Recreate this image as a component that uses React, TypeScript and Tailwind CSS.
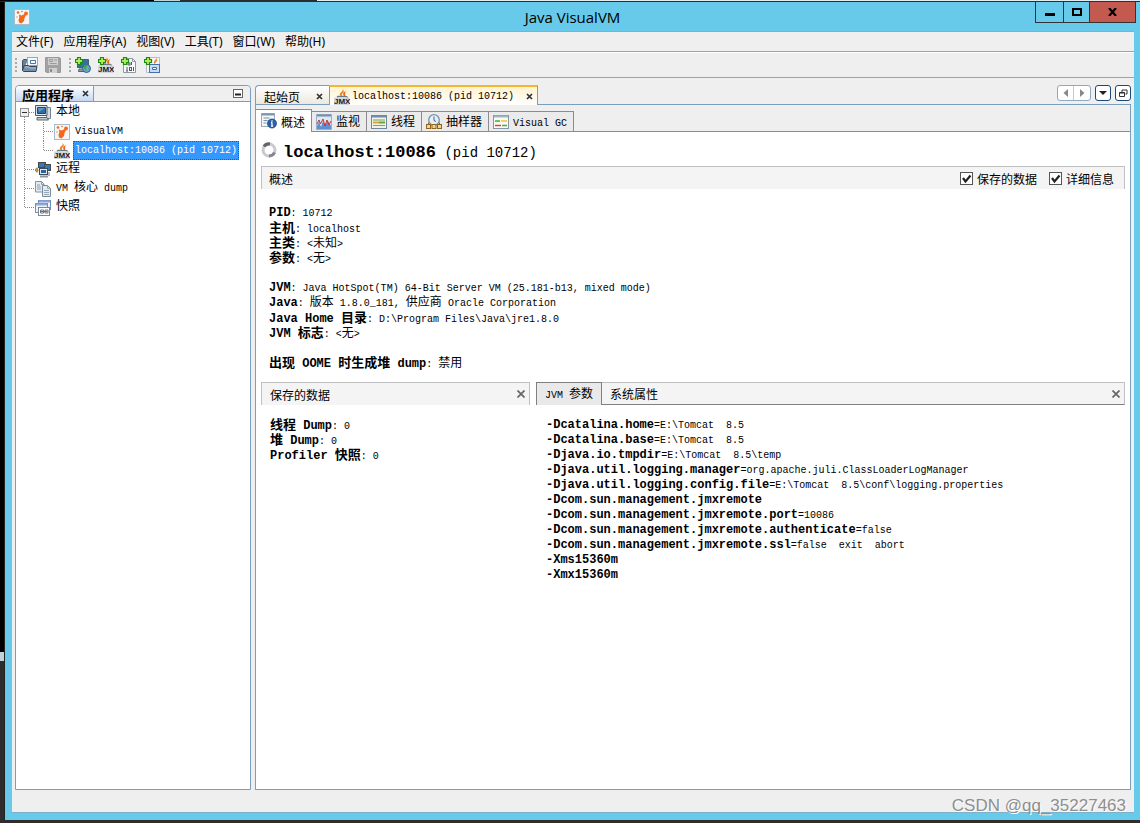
import type { ReactNode } from "react";

const CJK = /([\u3000-\u9fff\uff00-\uffef]+)/;

// Latin and CJK runs get their own sizes so that both keep the same grid
function Mixed({ text, bold = false }: { text: string; bold?: boolean }) {
  return (
    <>
      {text.split(CJK).map((run, i) => {
        if (!run) return null;
        const size = CJK.test(run)
          ? bold
            ? "text-[13px]"
            : "text-[12px]"
          : bold
            ? "text-[12px]"
            : "text-[10px]";
        return (
          <span
            key={i}
            className={`font-['Liberation_Mono','Noto_Sans_CJK_SC',monospace] ${size} ${bold ? "font-bold" : ""}`}
          >
            {run}
          </span>
        );
      })}
    </>
  );
}

function Icon({ children }: { children: ReactNode }) {
  return (
    <svg width="16" height="16" viewBox="0 0 16 16" className="shrink-0" aria-hidden="true">
      {children}
    </svg>
  );
}

function Plus() {
  return (
    <path
      d="M2.5.5h3v2h2v3h-2v2h-3v-2h-2v-3h2z"
      fill="#b6ec5c"
      stroke="#1f8a12"
      strokeWidth="1.2"
    />
  );
}

function Jmx() {
  return (
    <>
      <path d="M8.500 0c1.500 2.500-3.500 3.500-2.500 6 .5 1.200 2 1.500 2 1.500s-.8-2 .5-3.200C10.500 2.800 10 1 8.500 0z" fill="#f0801a" />
      <path d="M12 2C9 3.200 8.500 4.500 9.500 6l.5 1.500c2.500-1.500 0-2.500 2-5.500z" fill="#e8691a" />
      <path d="M3 8.500l1-1h8l2 1" fill="none" stroke="#6c7884" strokeWidth="1.300" />
      <path d="M0 8.500h15.500V16H0z" fill="#d3d7da" />
      <text x="0" y="15" fontSize="8" fontWeight="700" fontFamily="Liberation Sans, sans-serif" fill="#1c1c1c">
        JMX
      </text>
    </>
  );
}

function JmxIcon() {
  return (
    <Icon>
      <Jmx />
    </Icon>
  );
}

function OpenIcon() {
  return (
    <Icon>
      <path d="M.5 14V3.500l1-1h3l1 1.500" fill="#6e8093" stroke="#3d5266" />
      <rect x="5.500" y=".5" width="10" height="8" fill="#f4f8fd" stroke="#8ea9c9" />
      <path d="M8.500 3.500h5v3h-5z" fill="#fff" stroke="#4474ad" />
      <path d="M1.500 14.500l-1-1 1.500-5h4.500l1 1h7.500l-1 5z" fill="#7890a6" stroke="#34495c" />
      <path d="M3 10h4l1 1h6" fill="none" stroke="#b4c4d2" />
    </Icon>
  );
}

function SaveIcon() {
  return (
    <Icon>
      <path d="M.5.500h14l1 1v14H1.500l-1-1z" fill="#a2a2a2" stroke="#999" />
      <path d="M3 1h10v7H3z" fill="#cecece" />
      <path d="M4.500 2.500h3v2h-3zM9 3h3M4.500 6.500h7" fill="none" stroke="#9c9c9c" />
      <path d="M4 11h8v5H4z" fill="#d0d0d0" />
      <path d="M5 12h2v3H5z" fill="#8e8e8e" />
    </Icon>
  );
}

function AddHostIcon() {
  return (
    <Icon>
      <path d="M2.500 2.500h11v8h-11z" fill="#2f72a8" stroke="#4c5f6d" />
      <path d="M4 12h6l1 2.500H3.500z" fill="#93a1aa" stroke="#53636e" />
      <circle cx="11.500" cy="11.500" r="4" fill="#6fa9dd" stroke="#2c5f91" />
      <path d="M9 9l2-1.500 1.500 1.500-1.500 2 1 3-2-1-1-2zM13 10l2 1-1 2.500z" fill="#48a340" />
      <Plus />
    </Icon>
  );
}

function AddJmxIcon() {
  return (
    <Icon>
      <Jmx />
      <Plus />
    </Icon>
  );
}

function AddDumpIcon() {
  return (
    <Icon>
      <path d="M2.500 1.500h9l3 3v11h-12z" fill="#f7f9fa" stroke="#8c99a3" />
      <path d="M11.500 1.500v3h3" fill="none" stroke="#8c99a3" />
      <path d="M10.500 5v3M6 10v4M5 14h2M12.500 10v4" stroke="#4f5b65" />
      <rect x="7" y="6" width="2" height="2" fill="none" stroke="#4f5b65" />
      <rect x="8.500" y="10.500" width="2" height="3" fill="none" stroke="#4f5b65" />
      <Plus />
    </Icon>
  );
}

function AddSnapshotIcon() {
  return (
    <Icon>
      <path d="M2.500.500h13v15h-13z" fill="#f3f6fa" stroke="#b5bec8" />
      <path d="M12 1c.5 2-3 2.500-2 6l2-1.500L13.500 3z" fill="#f08a2a" />
      <rect x="5.500" y="7.500" width="10" height="8" fill="#cbdcf2" stroke="#426fae" />
      <path d="M8.500 10.500h4v2h-4z" fill="#fff" stroke="#426fae" />
      <Plus />
    </Icon>
  );
}

function VisualVmIcon() {
  return (
    <Icon>
      <rect x=".5" y=".5" width="15" height="15" fill="#f7f5f4" stroke="#a9bccb" />
      <path d="M5 5.500l2.500 1L11 5l1 1-1.500 3-.5 3-2.500 2.500-2.500-1-.5-2.500.8-2.500z" fill="#f2691e" />
      <circle cx="4" cy="3.500" r="1.300" fill="#f2691e" />
      <circle cx="12" cy="4.500" r="1.900" fill="#f2691e" />
      <circle cx="8" cy="2.500" r=".8" fill="#f2691e" />
      <circle cx="3" cy="8" r=".8" fill="#f59a66" />
    </Icon>
  );
}

function LocalIcon() {
  return (
    <Icon>
      <path d="M11.500 2.500h4v11h-4z" fill="#d5dadd" stroke="#77858f" />
      <path d="M.5.500h11.500v10H.5z" fill="#dde3e6" stroke="#4e5a63" />
      <path d="M2.500 2.500h8v6h-8z" fill="#2b6ea8" stroke="#174a78" />
      <path d="M3 3h7L4 7z" fill="#5b98c8" />
      <path d="M2 12.500h10l1.500 2.500H2z" fill="#c4cace" stroke="#5c6871" />
    </Icon>
  );
}

function RemoteIcon() {
  return (
    <Icon>
      <path d="M2 5.500v5M14 10v4" stroke="#6a757d" />
      <rect x="3.500" y=".5" width="7" height="5" fill="#3c78ac" stroke="#3f4a52" />
      <rect x="9.500" y="2.500" width="6" height="6" fill="#3c78ac" stroke="#3f4a52" />
      <rect x="4.500" y="6.500" width="8" height="6" fill="#e1e6e9" stroke="#3f4a52" />
      <rect x="6" y="8" width="5" height="3" fill="#2367a6" />
      <path d="M5 14.500h8" stroke="#8b959c" strokeWidth="2" />
      <circle cx="1.700" cy="8" r="1.500" fill="#d99a3f" stroke="#8b6226" strokeWidth=".6" />
    </Icon>
  );
}

function CoreDumpIcon() {
  return (
    <Icon>
      <path d="M.5.500h6l2.500 2.500v8H.5z" fill="#e4ebf1" stroke="#8293a2" />
      <path d="M6.500.500v3H9M2 4h3M2 6h4M2 8h4" fill="none" stroke="#8d9dab" />
      <path d="M7.500 4.500h5l3 3v8h-8z" fill="#e4ebf1" stroke="#7a8b9b" />
      <path d="M12.500 4.500v3h3M9 9.500h5M9 11.500h5M9 13.500h5" fill="none" stroke="#99a8b5" />
    </Icon>
  );
}

function SnapshotIcon() {
  return (
    <Icon>
      <rect x="3.500" y=".5" width="12" height="9" fill="#eef3fa" stroke="#6f8fc0" />
      <path d="M4 1.500h11" stroke="#8fabd4" strokeWidth="2" />
      <rect x=".5" y="3.500" width="12" height="9" fill="#eef3fa" stroke="#6f8fc0" />
      <path d="M1 4.500h11" stroke="#8fabd4" strokeWidth="2" />
      <rect x="3.500" y="7.500" width="11" height="8" fill="#fff" stroke="#7f8890" />
      <path d="M5.500 10h3v3h-3zM10 10h3v3h-3zM5.500 11.500h7" fill="none" stroke="#68737c" />
    </Icon>
  );
}

function OverviewIcon() {
  return (
    <Icon>
      <rect x=".5" y=".5" width="13" height="13" fill="#f4f7fa" stroke="#9daab6" />
      <path d="M1 1.500h12" stroke="#7996b4" strokeWidth="2" />
      <path d="M2.500 5h6M2.500 7.500h4M2.500 10h3" stroke="#7b93ac" />
      <circle cx="11" cy="10.500" r="4.500" fill="#2b62a8" stroke="#1d467c" strokeWidth=".8" />
      <path d="M11 7.200v1.500M11 9.500v3.800M10 13.200h2.200M10 9.700h1" stroke="#fff" strokeWidth="1.200" />
    </Icon>
  );
}

function MonitorIcon() {
  return (
    <Icon>
      <rect x=".5" y=".5" width="15" height="15" fill="#dbe7f2" stroke="#9fb1c3" />
      <path d="M1 1.500h14" stroke="#6e90b3" strokeWidth="2" />
      <path d="M1 15v-3l2-4 2 5 2-6 2 4 3-4 3 5v3z" fill="#5c90d2" />
      <path d="M1 10l2-4 1.500 4L7 5l2 7 2-6 2 5 2-4" fill="none" stroke="#d42f2f" />
    </Icon>
  );
}

function ThreadsIcon() {
  return (
    <Icon>
      <rect x=".5" y="1.500" width="15" height="13" fill="#f2f3e3" stroke="#71879c" />
      <path d="M1 2.500h14" stroke="#6e8cac" strokeWidth="2" />
      <path d="M2 6h12" stroke="#7b9f55" />
      <path d="M2 8.500h6" stroke="#d9a63a" strokeWidth="2" />
      <path d="M8 8.500h6" stroke="#5ca944" strokeWidth="2" />
      <path d="M2 11.500h12" stroke="#8a9a68" />
    </Icon>
  );
}

function SamplerIcon() {
  return (
    <Icon>
      <circle cx="8" cy="6" r="5.300" fill="#e6eff7" stroke="#7890a8" strokeWidth="1.300" />
      <path d="M8 2.500V6.500l2 1" fill="none" stroke="#466383" />
      <rect x=".5" y="10.500" width="4" height="4" fill="#f6d487" stroke="#8d6420" />
      <rect x="6" y="10.500" width="4" height="4" fill="#f6d487" stroke="#8d6420" />
      <rect x="11.500" y="10.500" width="4" height="4" fill="#f6d487" stroke="#8d6420" />
      <path d="M2.500 10V8.500M13.500 10V8.500" stroke="#8d6420" />
    </Icon>
  );
}

function GcIcon() {
  return (
    <Icon>
      <rect x=".5" y="1.500" width="15" height="13" fill="#fbfbf4" stroke="#8497a9" />
      <path d="M1 2.500h14" stroke="#9fb5cb" strokeWidth="2" />
      <path d="M2 7h5M9 11.500h5" stroke="#43b02f" strokeWidth="1.400" />
      <path d="M8 7h6" stroke="#e7c51e" strokeWidth="1.400" />
      <path d="M2 11.500h6" stroke="#dc3a2a" strokeWidth="1.400" />
    </Icon>
  );
}

function SmallCross() {
  return (
    <svg width="7" height="7" viewBox="0 0 7 7" aria-hidden="true">
      <path d="M1 1l5 5M6 1L1 6" stroke="#333" strokeWidth="1.700" />
    </svg>
  );
}

function CloseSection({ label }: { label: string }) {
  return (
    <button type="button" aria-label={label} className="ml-auto mr-1 flex">
      <svg width="8" height="8" viewBox="0 0 8 8" aria-hidden="true">
        <path d="M.5.500l7 7M7.500.500l-7 7" stroke="#666" strokeWidth="1.700" />
      </svg>
    </button>
  );
}

const menus = ["文件(F)", "应用程序(A)", "视图(V)", "工具(T)", "窗口(W)", "帮助(H)"];

const views = [
  { label: "概述", icon: <OverviewIcon />, active: true },
  { label: "监视", icon: <MonitorIcon /> },
  { label: "线程", icon: <ThreadsIcon /> },
  { label: "抽样器", icon: <SamplerIcon /> },
  { label: "Visual GC", icon: <GcIcon /> },
];

const details = [
  ["PID", "10712"],
  ["主机", "localhost"],
  ["主类", "<未知>"],
  ["参数", "<无>"],
  null,
  ["JVM", "Java HotSpot(TM) 64-Bit Server VM (25.181-b13, mixed mode)"],
  ["Java", "版本 1.8.0_181, 供应商 Oracle Corporation"],
  ["Java Home 目录", "D:\\Program Files\\Java\\jre1.8.0"],
  ["JVM 标志", "<无>"],
  null,
  ["出现 OOME 时生成堆 dump", "禁用"],
];

const savedData = [
  ["线程 Dump", "0"],
  ["堆 Dump", "0"],
  ["Profiler 快照", "0"],
];

const jvmArgs = [
  ["-Dcatalina.home", "=E:\\Tomcat  8.5"],
  ["-Dcatalina.base", "=E:\\Tomcat  8.5"],
  ["-Djava.io.tmpdir", "=E:\\Tomcat  8.5\\temp"],
  ["-Djava.util.logging.manager", "=org.apache.juli.ClassLoaderLogManager"],
  ["-Djava.util.logging.config.file", "=E:\\Tomcat  8.5\\conf\\logging.properties"],
  ["-Dcom.sun.management.jmxremote", ""],
  ["-Dcom.sun.management.jmxremote.port", "=10086"],
  ["-Dcom.sun.management.jmxremote.authenticate", "=false"],
  ["-Dcom.sun.management.jmxremote.ssl", "=false  exit  abort"],
  ["-Xms15360m", ""],
  ["-Xmx15360m", ""],
];

function TextLine({ children }: { children?: ReactNode }) {
  return (
    <div className="flex h-[15px] items-center whitespace-pre font-['Liberation_Mono','Noto_Sans_CJK_SC',monospace]">
      <p>{children}</p>
    </div>
  );
}

function DetailLines({ rows }: { rows: (string[] | null)[] }) {
  return (
    <>
      {rows.map((row, i) => (
        <TextLine key={i}>
          {row && (
            <>
              <Mixed text={row[0]} bold />
              <Mixed text={`: ${row[1]}`} />
            </>
          )}
        </TextLine>
      ))}
    </>
  );
}

type Branch = "expander" | "tee" | "corner" | "line";

function Connector({ kind }: { kind: Branch }) {
  return (
    <svg width="19" height="19" viewBox="0 0 19 19" className="shrink-0" aria-hidden="true">
      {kind !== "expander" && (
        <path d={kind === "corner" ? "M8.500 0V9.500" : "M8.500 0V19"} stroke="#888" strokeDasharray="1 1" />
      )}
      {(kind === "tee" || kind === "corner") && (
        <path d="M9 9.500H19" stroke="#888" strokeDasharray="1 1" />
      )}
      {kind === "expander" && (
        <>
          <path d="M13 9.500H19M8.500 14V19" stroke="#888" strokeDasharray="1 1" />
          <rect x="4.500" y="5.500" width="8" height="8" fill="#f0f0f0" stroke="#919191" />
          <path d="M6 9.500h5" stroke="#333" />
        </>
      )}
    </svg>
  );
}

const tree: { label: string; icon: ReactNode; branches: Branch[]; selected?: boolean }[] = [
  { label: "本地", icon: <LocalIcon />, branches: ["expander"] },
  { label: "VisualVM", icon: <VisualVmIcon />, branches: ["line", "tee"] },
  { label: "localhost:10086 (pid 10712)", icon: <JmxIcon />, branches: ["line", "corner"], selected: true },
  { label: "远程", icon: <RemoteIcon />, branches: ["tee"] },
  { label: "VM 核心 dump", icon: <CoreDumpIcon />, branches: ["tee"] },
  { label: "快照", icon: <SnapshotIcon />, branches: ["corner"] },
];

function Applications() {
  return (
    <aside className="flex w-[236px] shrink-0 flex-col rounded-t border border-[#7b9ebd] bg-white">
      <div className="flex h-[16px] items-center justify-between rounded-t border-b border-[#7b9ebd] bg-[#efefef]">
        <div className="flex h-[15px] items-start rounded-tl border-r border-[#7b9ebd] bg-linear-to-b from-white to-[#c6d7f3] pl-1.5 pr-1">
          <h2 className="text-[13px] font-bold leading-[18px]">应用程序</h2>
          <button type="button" aria-label="关闭应用程序" className="ml-2 mt-1 flex">
            <SmallCross />
          </button>
        </div>
        <button type="button" aria-label="最小化面板" className="mr-[7px] flex">
          <svg width="10" height="9" viewBox="0 0 10 9" aria-hidden="true">
            <rect x=".5" y=".5" width="9" height="8" fill="#fff" stroke="#666" />
            <path d="M2 5.500h6" stroke="#222" strokeWidth="2" />
          </svg>
        </button>
      </div>
      <ul className="pt-px">
        {tree.map((node) => (
          <li key={node.label} className="flex h-[19px] items-center">
            {node.branches.map((kind, i) => (
              <Connector key={i} kind={kind} />
            ))}
            {node.icon}
            <span
              className={`ml-[3px] flex h-[19px] items-center whitespace-pre border px-px font-['Liberation_Mono','Noto_Sans_CJK_SC',monospace] ${
                node.selected
                  ? "border-dotted border-[#7a4a10] bg-[#3399ff] text-white"
                  : "border-transparent"
              }`}
            >
              <span>
                <Mixed text={node.label} />
              </span>
            </span>
          </li>
        ))}
      </ul>
    </aside>
  );
}

function CheckOption({ label }: { label: string }) {
  return (
    <label className="flex items-center gap-1">
      <span className="grid size-[13px]">
        <input
          type="checkbox"
          defaultChecked
          className="peer col-start-1 row-start-1 size-[13px] appearance-none border border-[#555] bg-white"
        />
        <svg
          viewBox="0 0 13 13"
          className="pointer-events-none invisible col-start-1 row-start-1 size-[13px] peer-checked:visible"
          aria-hidden="true"
        >
          <path d="M3 6l2.500 3.500L10.500 3.500" fill="none" stroke="#222" strokeWidth="2.200" />
        </svg>
      </span>
      {label}
    </label>
  );
}

function EditorTabs() {
  return (
    <div className="flex h-5 items-end">
      <div className="flex h-5 items-center rounded-tl border border-r-0 border-[#7b9ebd] bg-linear-to-b from-white to-[#ece9df] pl-2 pr-1.5 pt-0.5">
        <button type="button">起始页</button>
        <button type="button" aria-label="关闭起始页" className="ml-4 flex">
          <SmallCross />
        </button>
      </div>
      <div className="flex h-5 items-center border-x border-t-2 border-x-[#7b9ebd] border-t-[#f6b633] bg-linear-to-b from-[#fff3cf] to-white px-1 pt-px">
        <JmxIcon />
        <button type="button" className="ml-0.5 flex">
          <Mixed text="localhost:10086 (pid 10712)" />
        </button>
        <button type="button" aria-label="关闭 localhost" className="ml-3 flex">
          <SmallCross />
        </button>
      </div>
      <div className="flex h-5 grow items-start justify-end gap-1 border-b border-[#7b9ebd]">
        <div className="flex h-4 rounded-[3px] border border-[#8fa9c0] bg-white">
          <button type="button" aria-label="上一个" className="grid w-4 place-items-center border-r border-[#c4ccd3]">
            <svg width="5" height="8" viewBox="0 0 5 8" aria-hidden="true">
              <path d="M5 0v8L.5 4z" fill="#888" />
            </svg>
          </button>
          <button type="button" aria-label="下一个" className="grid w-4 place-items-center">
            <svg width="5" height="8" viewBox="0 0 5 8" aria-hidden="true">
              <path d="M0 0v8l4.500-4z" fill="#888" />
            </svg>
          </button>
        </div>
        <button
          type="button"
          aria-label="文档列表"
          className="grid size-4 place-items-center rounded-[3px] border border-[#1d4a78] bg-white"
        >
          <svg width="8" height="4" viewBox="0 0 8 4" aria-hidden="true">
            <path d="M0 0h8L4 4z" fill="#222" />
          </svg>
        </button>
        <button
          type="button"
          aria-label="还原"
          className="grid size-4 place-items-center rounded-[3px] border border-[#1d4a78] bg-white"
        >
          <svg width="9" height="9" viewBox="0 0 9 9" aria-hidden="true">
            <path d="M3 3V1h5v4H6.500" fill="none" stroke="#333" />
            <path d="M.5 3.500h5v4h-5zM.5 4h5" fill="none" stroke="#333" />
          </svg>
        </button>
      </div>
    </div>
  );
}

function Editor() {
  return (
    <main className="flex min-w-0 grow flex-col">
      <EditorTabs />
      <div className="flex grow flex-col border border-t-0 border-[#7b9ebd] bg-white">
        <nav className="flex h-[27px] items-end bg-[#efefef] pt-1">
          {views.map((view) =>
            view.active ? (
              <button
                key={view.label}
                type="button"
                className="flex h-[23px] items-center gap-1 border-r border-t border-[#8b8b90] bg-white pl-[5px] pr-1.5"
              >
                {view.icon}
                {view.label}
              </button>
            ) : (
              <button
                key={view.label}
                type="button"
                className="flex h-[21px] items-center gap-1 border-y border-r border-[#8b8b90] bg-[#ebebeb] pl-1 pr-1.5"
              >
                {view.icon}
                <span>
                  <Mixed text={view.label} />
                </span>
              </button>
            ),
          )}
          <span className="h-px grow bg-[#8b8b90]" />
        </nav>

        <div className="px-[5px]">
          <header className="flex h-[34px] items-center whitespace-pre pt-2 font-['Liberation_Mono',monospace]">
            <svg width="16" height="16" viewBox="0 0 16 16" className="-mt-1.5 mr-1.5" aria-hidden="true">
              <circle cx="8" cy="8" r="6" fill="none" stroke="#c9cace" strokeWidth="3" />
              <path d="M3 4.500A6 6 0 0 1 9 2" fill="none" stroke="#63646b" strokeWidth="3" />
              <path d="M13.500 10.500A6 6 0 0 1 8 14" fill="none" stroke="#85868d" strokeWidth="3" />
            </svg>
            <h1 className="text-[14px]">
              <b className="text-[17px]">localhost:10086</b> (pid 10712)
            </h1>
          </header>

          <div className="flex h-[23px] items-center gap-3 border border-b-0 border-[#c0c0c0] bg-[#f4f4f4] pl-[7px] pr-2.5 pt-px">
            <h2 className="mr-auto">概述</h2>
            <CheckOption label="保存的数据" />
            <CheckOption label="详细信息" />
          </div>

          <section className="pl-2 pt-[17px]">
            <DetailLines rows={details} />
          </section>

          <div className="mt-[11px] grid grid-cols-[269fr_589fr] gap-1.5">
            <section>
              <div className="flex h-[23px] items-center border border-b-0 border-[#c0c0c0] bg-[#f4f4f4] pl-2">
                <h2>保存的数据</h2>
                <CloseSection label="关闭保存的数据" />
              </div>
              <div className="pl-[9px] pt-[13px]">
                <DetailLines rows={savedData} />
              </div>
            </section>
            <section>
              <div className="flex h-[23px] items-stretch">
                <button
                  type="button"
                  className="border border-b-0 border-[#808080] bg-[#e9e9e9] px-2 text-center"
                >
                  <Mixed text="JVM 参数" />
                </button>
                <div className="flex grow items-center border border-l-0 border-[#c0c0c0] border-b-[#808080] bg-[#f4f4f4] pl-2">
                  <button type="button">系统属性</button>
                  <CloseSection label="关闭 JVM 参数" />
                </div>
              </div>
              <div className="pl-2.5 pt-[13px]">
                {jvmArgs.map(([name, value]) => (
                  <TextLine key={name}>
                    <Mixed text={name} bold />
                    <Mixed text={value} />
                  </TextLine>
                ))}
              </div>
            </section>
          </div>
        </div>
      </div>
    </main>
  );
}

function Grip() {
  return <span className="h-3.5 border-l-2 border-dotted border-[#a8a8a8]" />;
}

function Toolbar() {
  const addActions = [
    { label: "添加主机", icon: <AddHostIcon /> },
    { label: "添加 JMX 连接", icon: <AddJmxIcon /> },
    { label: "添加核心 dump", icon: <AddDumpIcon /> },
    { label: "添加快照", icon: <AddSnapshotIcon /> },
  ];
  return (
    <div className="flex h-[26px] items-center border-b border-t border-b-[#a0a0a0] border-t-white pl-[3px]">
      <Grip />
      <div className="ml-[5px] mr-2 flex gap-[7px]">
        <button type="button" aria-label="打开文件">
          <OpenIcon />
        </button>
        <button type="button" aria-label="另存为" disabled>
          <SaveIcon />
        </button>
      </div>
      <Grip />
      <div className="ml-1 flex gap-[7px]">
        {addActions.map((action) => (
          <button key={action.label} type="button" aria-label={action.label}>
            {action.icon}
          </button>
        ))}
      </div>
    </div>
  );
}

function TitleBar() {
  return (
    <header className="grid h-[29px] grid-cols-[1fr_auto_1fr] items-center">
      <span className="pl-[9px]">
        <VisualVmIcon />
      </span>
      <h1 className="font-['Open_Sans',sans-serif] text-[15px] leading-5">Java VisualVM</h1>
      <div className="mr-1 flex h-[21px] justify-end self-start">
        <button type="button" aria-label="最小化" className="grid w-[28px] place-items-center border-b border-l border-[#333]">
          <span className="mt-1 h-[3px] w-[10px] bg-black" />
        </button>
        <button type="button" aria-label="最大化" className="grid w-[26px] place-items-center border-b border-l border-[#333]">
          <span className="h-2 w-[10px] border-2 border-black" />
        </button>
        <button type="button" aria-label="关闭" className="grid w-[47px] place-items-center border-x border-b border-[#333] bg-[#c4594f]">
          <svg width="9" height="8" viewBox="0 0 9 8" aria-hidden="true">
            <path d="M1 0l7 8M8 0L1 8" stroke="#000" strokeWidth="2.200" />
          </svg>
        </button>
      </div>
    </header>
  );
}

export default function App() {
  return (
    <div className="flex min-h-screen flex-col bg-[#2d2d2d] pb-[3px] font-['Noto_Sans_CJK_SC',sans-serif] text-[12px] leading-[15px] text-black">
      {/* Slivers of the desktop behind the window */}
      <div className="flex h-0.5 border-b border-[#2d2d2d]">
        <span className="w-[154px] bg-black" />
        <span className="w-[26px] bg-[#c3d3da]" />
        <span className="w-[137px] bg-[#2d2d2d]" />
        <span className="grow bg-[#e6eaec]" />
      </div>
      <div className="flex grow">
        <div className="flex w-[5px] flex-col border-r border-[#222]">
          <span className="h-[650px] bg-black" />
          <span className="h-[9px] bg-[#bfd3db]" />
        </div>
        <div className="flex min-w-0 grow flex-col bg-[#67caea] pb-[7px]">
          <TitleBar />
          <div className="ml-[7px] mr-1.5 flex grow flex-col border-y border-[#7bb2cb] bg-[#efefef]">
            <nav className="flex h-5 items-center gap-2.5 border-b border-[#a0a0a0] pl-1 font-['Noto_Sans','Noto_Sans_CJK_SC',sans-serif]">
              {menus.map((menu) => (
                <button key={menu} type="button">
                  {menu}
                </button>
              ))}
            </nav>
            <Toolbar />
            <div className="flex grow gap-1 px-[3px] pt-[7px]">
              <Applications />
              <Editor />
            </div>
            <footer className="flex h-[22px] items-center justify-end pr-2 pt-2 font-['Liberation_Sans',sans-serif] text-[17px] text-[#8e8e8e] [text-shadow:1px_1px_0_#fff]">
              CSDN @qq_35227463
            </footer>
          </div>
        </div>
      </div>
    </div>
  );
}
